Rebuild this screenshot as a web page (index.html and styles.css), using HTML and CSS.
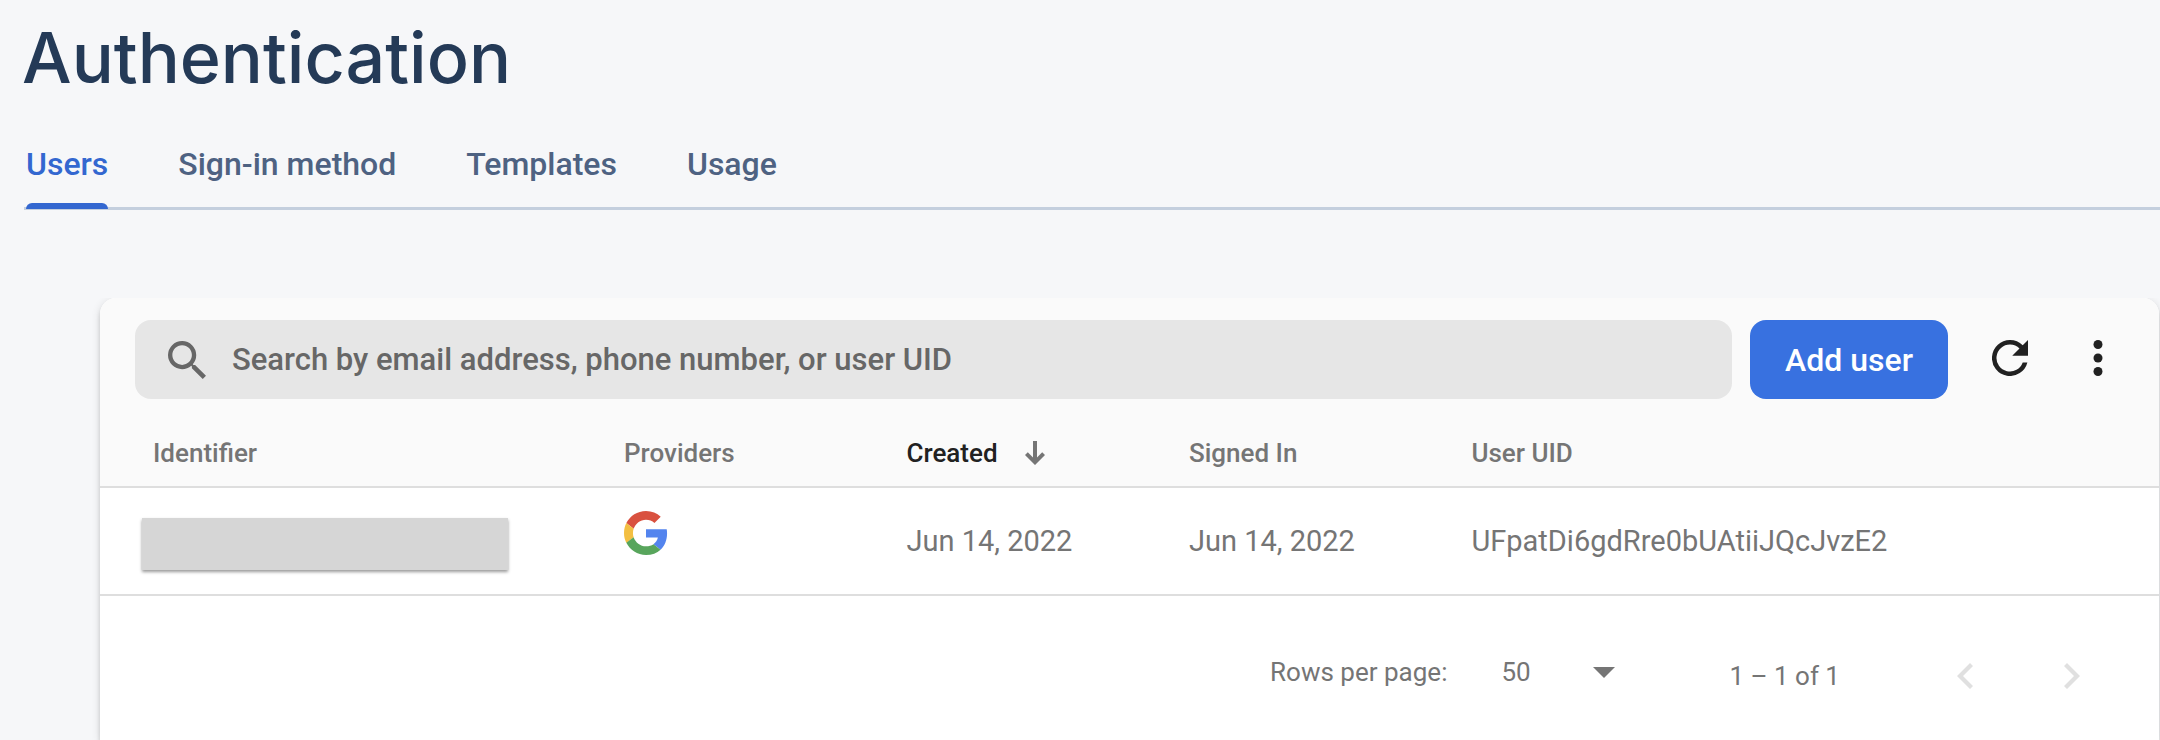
FILE: index.html
```html
<!DOCTYPE html>
<html lang="en">
<head>
<meta charset="utf-8">
<title>Authentication</title>
<link rel="stylesheet" href="styles.css">
</head>
<body>
<div class="page">
  <header class="page-header">
    <h1 class="title">Authentication</h1>
    <nav class="tabs">
      <a class="tab tab-active" href="#users" aria-current="page">Users</a>
      <a class="tab" href="#sign-in">Sign-in method</a>
      <a class="tab" href="#templates">Templates</a>
      <a class="tab" href="#usage">Usage</a>
    </nav>
  </header>
  <main class="card">
    <div class="toolbar">
      <label class="search">
        <svg class="search-icon" viewBox="3 3 17.5 17.5" aria-hidden="true"><path d="M15.5 14h-.79l-.28-.27A6.47 6.47 0 0 0 16 9.5 6.5 6.5 0 1 0 9.5 16c1.61 0 3.09-.59 4.23-1.57l.27.28v.79l5 4.99L20.49 19l-4.99-5zm-6 0C7.01 14 5 11.99 5 9.5S7.01 5 9.5 5 14 7.01 14 9.5 11.99 14 9.5 14z"/></svg>
        <input class="search-input" type="text" aria-label="Search users" placeholder="Search by email address, phone number, or user UID">
      </label>
      <button class="add-button" type="button">Add user</button>
      <div class="tools">
        <button class="icon-button" type="button" aria-label="Refresh"><svg class="tool-icon" viewBox="4 4 16 16"><path d="M17.65 6.35A7.96 7.96 0 0 0 12 4a8 8 0 1 0 7.73 10h-2.08A6 6 0 1 1 12 6c1.66 0 3.14.69 4.22 1.78L13 11h7V4l-2.35 2.35z"/></svg></button>
        <button class="icon-button" type="button" aria-label="More options"><svg class="tool-icon" viewBox="4 4 16 16"><circle cx="12" cy="6" r="2"/><circle cx="12" cy="12" r="2"/><circle cx="12" cy="18" r="2"/></svg></button>
      </div>
    </div>
    <table class="users">
      <colgroup><col class="col-identifier"><col class="col-field"><col class="col-field"><col class="col-field"><col></colgroup>
      <thead>
        <tr>
          <th>Identifier</th>
          <th>Providers</th>
          <th class="sorted" aria-sort="descending"><span class="sort">Created <svg class="sort-icon" viewBox="0 0 20 24" aria-hidden="true"><path d="M8 0h4v16.5l5.2-5.2L20 14 10 24 0 14l2.8-2.7L8 16.5z"/></svg></span></th>
          <th>Signed In</th>
          <th>User UID</th>
        </tr>
      </thead>
      <tbody>
        <tr>
          <td class="identifier"><div class="redacted"></div></td>
          <td class="provider"><svg class="google" viewBox="0 0 48 48" role="img" aria-label="Google"><path fill="#d9513f" d="M24 9.5c3.54 0 6.71 1.22 9.21 3.6l6.85-6.85C35.9 2.38 30.47 0 24 0 14.62 0 6.51 5.38 2.56 13.22l7.98 6.19C12.43 13.72 17.74 9.5 24 9.5z"/><path fill="#5384ee" d="M46.98 24.55c0-1.57-.15-3.09-.38-4.55H24v9.02h12.94c-.58 2.96-2.26 5.48-4.78 7.18l7.73 6c4.51-4.18 7.09-10.36 7.09-17.65z"/><path fill="#f3bf42" d="M10.53 28.59c-.48-1.45-.76-2.99-.76-4.59s.27-3.14.76-4.59l-7.98-6.19C.92 16.46 0 20.12 0 24s.92 7.54 2.56 10.78l7.97-6.19z"/><path fill="#58a55c" d="M24 48c6.48 0 11.93-2.13 15.89-5.81l-7.73-6c-2.15 1.45-4.92 2.3-8.16 2.3-6.26 0-11.57-4.22-13.47-9.91l-7.98 6.19C6.51 42.62 14.62 48 24 48z"/></svg></td>
          <td>Jun 14, 2022</td>
          <td>Jun 14, 2022</td>
          <td>UFpatDi6gdRre0bUAtiiJQcJvzE2</td>
        </tr>
      </tbody>
    </table>
    <div class="pager">
      <div class="page-size">
        <label for="rows">Rows per page:</label>
        <span class="select-wrap">
          <select class="rows" id="rows"><option>50</option><option>100</option></select>
          <svg class="caret" viewBox="0 0 22 11" aria-hidden="true"><path d="M0 0h22L11 11z"/></svg>
        </span>
      </div>
      <span class="range">1 – 1 of 1</span>
      <div class="page-buttons">
        <button class="icon-button" type="button" disabled aria-label="Previous page"><svg class="chevron" viewBox="0 0 16 26"><path d="M13 0l3 3L6 13l10 10-3 3L0 13z"/></svg></button>
        <button class="icon-button" type="button" disabled aria-label="Next page"><svg class="chevron" viewBox="0 0 16 26"><path d="M3 0L0 3l10 10L0 23l3 3 13-13z"/></svg></button>
      </div>
    </div>
  </main>
</div>
</body>
</html>
```
FILE: styles.css
```css
* { box-sizing: border-box; }
body {
  margin: 0;
  background: #f6f7f9;
  color: #757575;
  font-family: Roboto, "Liberation Sans", sans-serif;
}
button, input, select { font: inherit; color: inherit; border: 0; background: none; padding: 0; }
svg { display: block; fill: currentColor; flex: none; }

.page { display: flex; flex-direction: column; min-height: 100vh; overflow: hidden; }
.page-header { padding: 14px 0 0 22px; }
.title {
  margin: 0;
  font: 500 70px/88px Inter, "Open Sans", sans-serif;
  color: #243a57;
}
.tabs {
  display: flex;
  gap: 70px;
  margin: 38px 0 0 2px;
  padding-left: 2px;
  border-bottom: 3px solid #c4cfde;
}
.tab {
  position: relative;
  height: 67px;
  font-size: 32px;
  font-weight: 500;
  line-height: 48px;
  color: #4e6282;
  text-decoration: none;
}
.tab-active { color: #3367d0; }
.tab-active::after {
  content: "";
  position: absolute;
  left: 0;
  right: 0;
  bottom: -2px;
  height: 6px;
  border-radius: 6px 6px 0 0;
  background: #3367d0;
}

.card {
  flex: 1;
  margin: 88px 1px 0 100px;
  background: #fff;
  border-radius: 16px 16px 0 0;
  box-shadow: 0 6px 2px -4px rgba(0,0,0,.2), 0 4px 4px rgba(0,0,0,.14), 0 2px 10px rgba(0,0,0,.12);
  clip-path: inset(0 -20px -20px);
}
.toolbar {
  display: flex;
  align-items: flex-start;
  padding: 22px 35px 0;
  background: #fafafa;
  border-radius: 16px 16px 0 0;
}
.search {
  flex: 1;
  display: flex;
  align-items: center;
  gap: 26px;
  height: 79px;
  padding: 0 33px;
  margin-right: 18px;
  border-radius: 16px;
  background: #e6e6e6;
  color: #676767;
  font-size: 31px;
  font-weight: 500;
}
.search-icon { width: 38px; height: 38px; }
.search-input { flex: 1; min-width: 0; outline: 0; }
.search-input::placeholder { color: #676767; opacity: 1; }
.add-button {
  height: 79px;
  padding: 0 35px;
  border-radius: 16px;
  background: #3871e0;
  color: #fff;
  font-size: 32px;
  font-weight: 500;
}
.tools { display: flex; gap: 36px; margin: 12px 0 0 36px; color: #212121; }
.icon-button { display: flex; align-items: center; justify-content: center; width: 52px; height: 52px; }
.tool-icon { width: 36px; height: 36px; }

.users { width: 100%; table-layout: fixed; border-collapse: collapse; text-align: left; }
.col-identifier { width: 25.45%; }
.col-field { width: 13.72%; }
.users th {
  height: 88px;
  padding: 20px 0 0;
  background: #fafafa;
  border-bottom: 2px solid #dedede;
  font-size: 26px;
  font-weight: 500;
}
.users td { height: 108px; padding: 0; border-bottom: 2px solid #dedede; font-size: 29px; }
.users th:first-child { padding-left: 53px; }
.users .sorted { color: #212121; }
.sort { display: flex; align-items: center; gap: 27px; }
.sort-icon { width: 20px; height: 24px; fill: #757575; }
.users .identifier { padding: 6px 0 0 42px; }
.redacted {
  width: 76%;
  height: 52px;
  background: #d6d6d6;
  box-shadow: 0 2px 3px rgba(0,0,0,.4);
}
.users .provider { padding-bottom: 16px; }
.google { width: 44px; height: 44px; }

.pager { display: flex; justify-content: flex-end; align-items: center; padding: 52px 61px 0 0; font-size: 26px; }
.page-size { display: flex; align-items: center; gap: 54px; padding-bottom: 8px; }
.select-wrap { display: flex; align-items: center; position: relative; }
.rows { width: 114px; height: 48px; appearance: none; }
.caret { position: absolute; right: 0; width: 22px; height: 11px; pointer-events: none; }
.range { margin: 0 99px 0 114px; }
.page-buttons { display: flex; gap: 55px; color: #e0e0e0; }
.chevron { width: 16px; height: 26px; }
```
